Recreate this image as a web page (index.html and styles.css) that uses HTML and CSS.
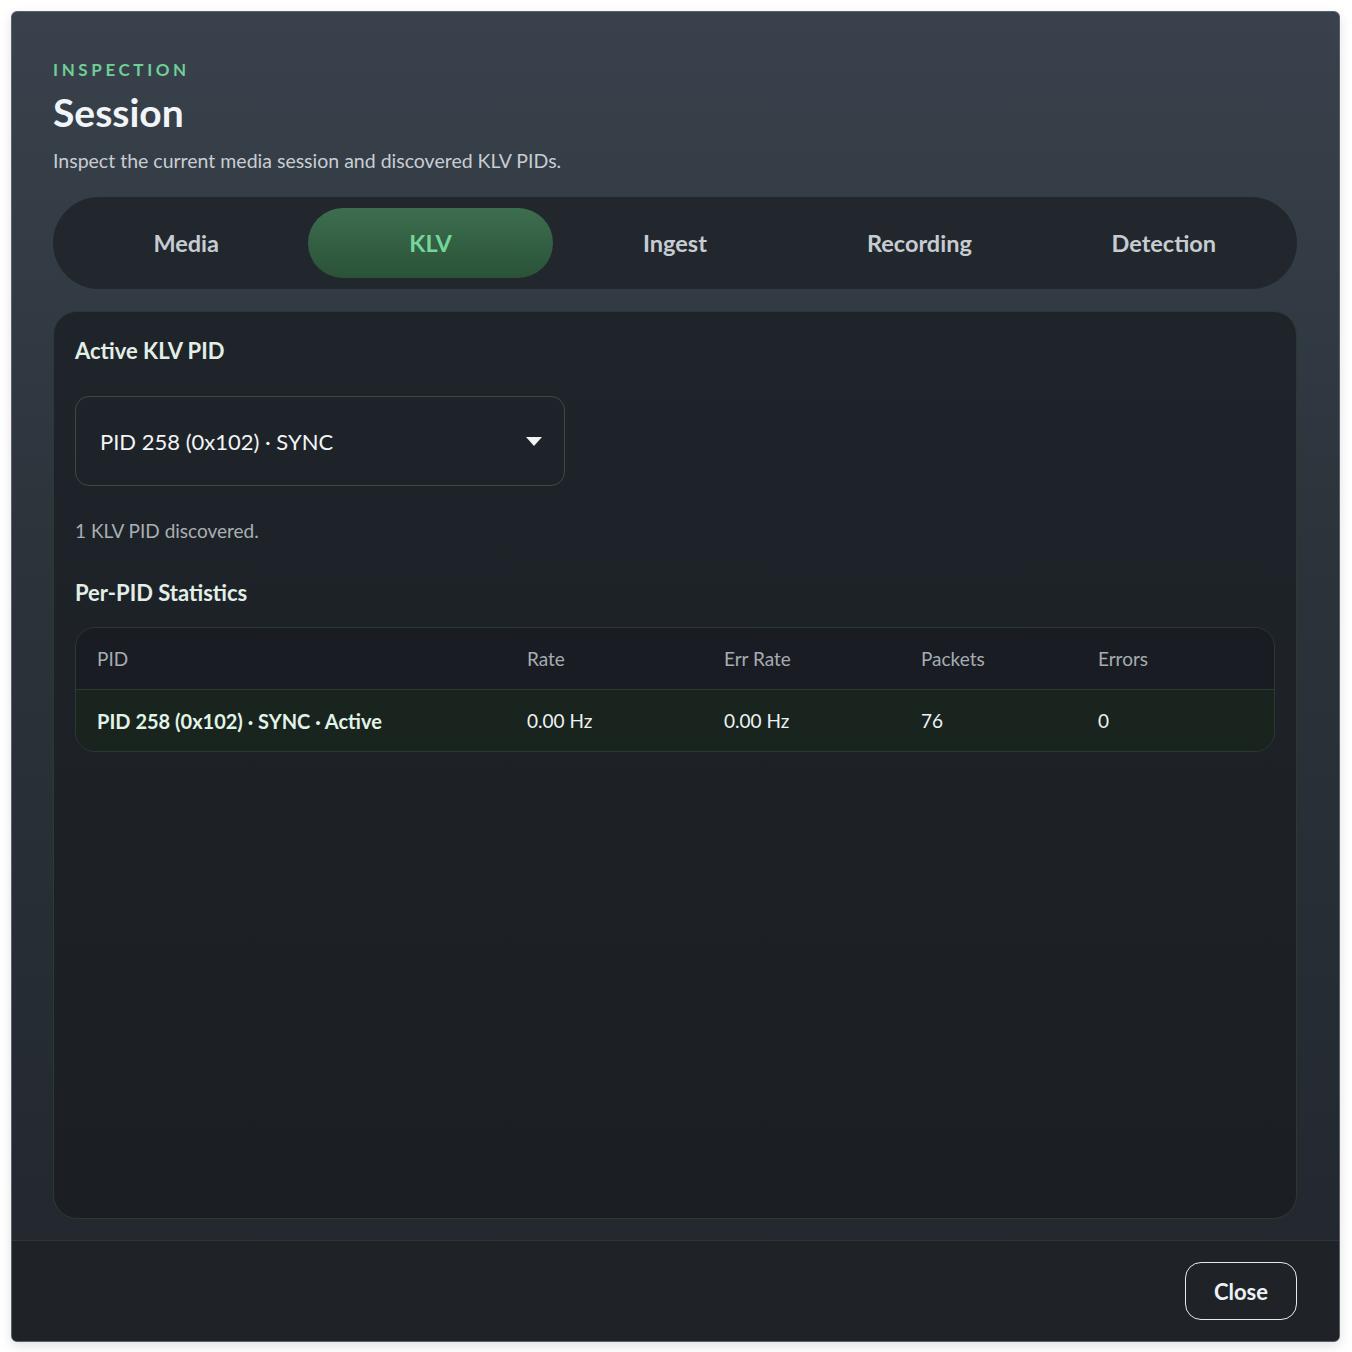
FILE: index.html
```html
<!DOCTYPE html>
<html lang="en">
<head>
    <meta charset="UTF-8">
    <title>Session</title>
    <link rel="stylesheet" href="styles.css">
</head>
<body>
    <div class="dialog">
        <div class="dialog-body">
            <div class="eyebrow">INSPECTION</div>
            <h1 class="title">Session</h1>
            <p class="subtitle">Inspect the current media session and discovered KLV PIDs.</p>

            <nav class="tabs">
                <button class="tab">Media</button>
                <button class="tab active">KLV</button>
                <button class="tab">Ingest</button>
                <button class="tab">Recording</button>
                <button class="tab">Detection</button>
            </nav>

            <section class="panel">
                <h2 class="section-title">Active KLV PID</h2>
                <div class="select">
                    <span>PID 258 (0x102) · SYNC</span>
                    <span class="caret"></span>
                </div>
                <p class="hint">1 KLV PID discovered.</p>

                <h2 class="section-title">Per-PID Statistics</h2>
                <div class="stats">
                    <div class="row head">
                        <div>PID</div>
                        <div>Rate</div>
                        <div>Err Rate</div>
                        <div>Packets</div>
                        <div>Errors</div>
                    </div>
                    <div class="row active-row">
                        <div class="pid">PID 258 (0x102) · SYNC · Active</div>
                        <div>0.00 Hz</div>
                        <div>0.00 Hz</div>
                        <div>76</div>
                        <div>0</div>
                    </div>
                </div>
            </section>
        </div>
        <footer class="dialog-footer">
            <button class="close">Close</button>
        </footer>
    </div>
</body>
</html>
```

FILE: styles.css
```css
html, body {
    margin: 0;
    height: 100%;
}
body {
    background-color: #ffffff;
    font-family: Lato, "Noto Sans", sans-serif;
    padding: 11px 12px 12px 11px;
    box-sizing: border-box;
}
.dialog {
    height: 1329px;
    display: flex;
    flex-direction: column;
    border: 1px solid #56616c;
    border-radius: 6px;
    background: linear-gradient(180deg, #39424c 0%, #2c333b 40%, #22272e 100%);
    box-shadow: 0 4px 12px rgba(0, 0, 0, 0.12);
    overflow: hidden;
}
.dialog-body {
    flex: 1;
    padding: 46px 42px 21px 41px;
    display: flex;
    flex-direction: column;
}
.eyebrow {
    color: #6fcf97;
    font-size: 17px;
    font-weight: 700;
    letter-spacing: 3.6px;
    line-height: 24px;
}
.title {
    margin: 8px 0 0;
    color: #f1f4f8;
    font-size: 39px;
    font-weight: 700;
    line-height: 44px;
}
.subtitle {
    margin: 14px 0 0;
    color: #c8cdd3;
    font-size: 19.5px;
    line-height: 26px;
}
.tabs {
    margin-top: 23px;
    display: grid;
    grid-template-columns: repeat(5, 1fr);
    padding: 11px;
    background-color: #22272e;
    border-radius: 46px;
}
.tab {
    height: 70px;
    border: none;
    border-radius: 35px;
    background: transparent;
    color: #c6ccd2;
    font-family: inherit;
    font-size: 23.5px;
    font-weight: 700;
}
.tab.active {
    background: linear-gradient(180deg, #3d6e4f 0%, #2a5238 100%);
    color: #74d69c;
}
.panel {
    flex: 1;
    margin-top: 22px;
    padding: 24px 21px;
    border: 1px solid #2b3a31;
    border-radius: 24px;
    background: linear-gradient(180deg, #1f242a 0%, #1b1f24 100%);
}
.section-title {
    margin: 0;
    color: #e2efe6;
    font-size: 22px;
    font-weight: 700;
    line-height: 30px;
}
.select {
    margin-top: 30px;
    width: 490px;
    height: 90px;
    box-sizing: border-box;
    display: flex;
    align-items: center;
    justify-content: space-between;
    padding: 0 22px 0 24px;
    border: 1px solid #3a4c41;
    border-radius: 14px;
    color: #f2f4f6;
    font-size: 22px;
}
.caret {
    width: 0;
    height: 0;
    border-left: 8px solid transparent;
    border-right: 8px solid transparent;
    border-top: 9px solid #f2f4f6;
}
.hint {
    margin: 32px 0 34px;
    color: #a9afb5;
    font-size: 19px;
    line-height: 26px;
}
.stats {
    margin-top: 19px;
    border: 1px solid #2b3a31;
    border-radius: 20px;
    overflow: hidden;
    font-size: 19px;
}
.row {
    display: grid;
    grid-template-columns: 430px 197px 197px 177px 1fr;
    align-items: center;
    height: 61px;
    padding-left: 21px;
}
.row.head {
    background-color: #191d23;
    color: #a6acb2;
    border-bottom: 1px solid #2b3a31;
}
.row.active-row {
    background-color: #1a241e;
    color: #eef2f4;
}
.row .pid {
    color: #e0f4e7;
    font-size: 20px;
    font-weight: 700;
}
.dialog-footer {
    height: 100px;
    display: flex;
    align-items: center;
    justify-content: flex-end;
    padding: 0 42px;
    border-top: 1px solid #2f353d;
    background-color: #1f2328;
}
.close {
    width: 112px;
    height: 58px;
    border: 1px solid #e6e9ec;
    border-radius: 16px;
    background: transparent;
    color: #eef1f4;
    font-family: inherit;
    font-size: 22px;
    font-weight: 700;
}
```
